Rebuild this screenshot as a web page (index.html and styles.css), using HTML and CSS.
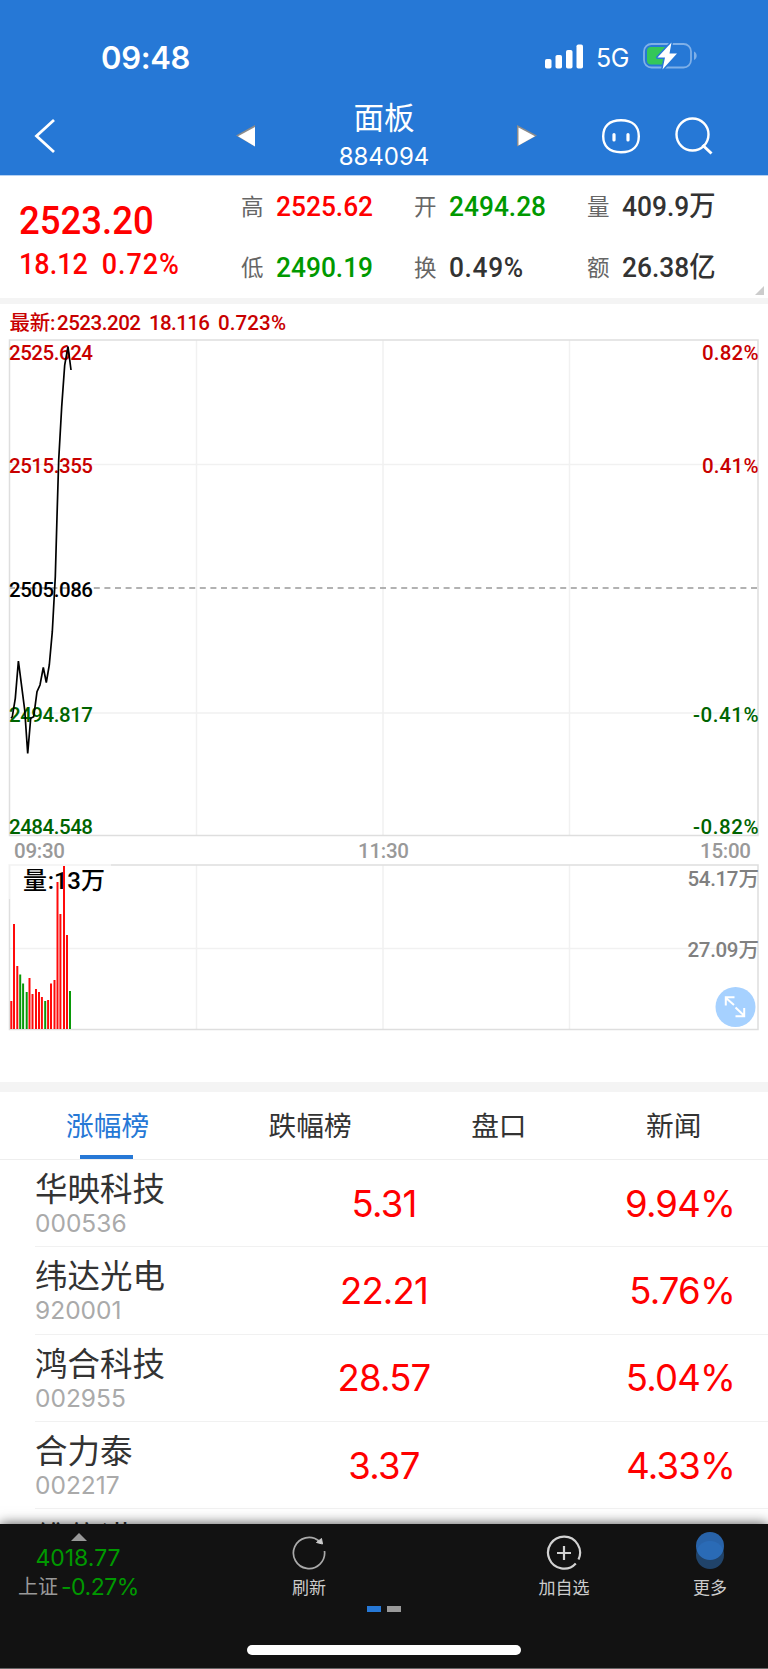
FILE: index.html
```html
<!DOCTYPE html>
<html lang="zh-CN">
<head>
  <meta charset="UTF-8">
  <meta name="viewport" content="width=device-width, initial-scale=1.0">
  <title>面板 884094</title>
  <link rel="stylesheet" href="styles.css">
</head>
<body>
  <header class="header">
    <div class="status-bar">
      <span class="clock">09:48</span>
      <svg class="signal" width="38" height="25" viewBox="0 0 38 25" fill="#fff">
        <rect x="0" y="15" width="6.5" height="9.5" rx="1.8"/>
        <rect x="10.5" y="11" width="6.5" height="13.5" rx="1.8"/>
        <rect x="21" y="6" width="6.5" height="18.5" rx="1.8"/>
        <rect x="31.5" y="0.5" width="6.5" height="24" rx="1.8"/>
      </svg>
      <span class="network">5G</span>
      <svg class="battery" width="55" height="28" viewBox="0 0 55 28">
        <rect x="1" y="2" width="47" height="23.5" rx="7.5" fill="none" stroke="#7fb0e8" stroke-width="1.8"/>
        <path d="M51 9.5c3.6 1.500 3.600 7 0 8.500z" fill="#7fb0e8"/>
        <path d="M8 5h15v17.500H8a4 4 0 0 1-4-4V9a4 4 0 0 1 4-4z" fill="#34c759"/>
        <path d="M28.500 0.500L14.500 15.500H22L19.500 27.500L34 11.500H26.500z" fill="#fff" stroke="#2678d6" stroke-width="3" paint-order="stroke" stroke-linejoin="round"/>
      </svg>
    </div>
    <nav class="nav">
      <svg class="back" width="22" height="36" viewBox="0 0 22 36" fill="none" stroke="#fff" stroke-width="2.800"><path d="M20 2L2.500 18L20 34"/></svg>
      <svg class="arrow" width="19" height="22" viewBox="0 0 19 22"><path d="M19 0L0 10.500L19 21.500z" fill="#8c8c8c"/><path d="M19 2L2 11.200L19 21.500z" fill="#fff"/></svg>
      <div class="title">
        <div class="title-name">面板</div>
        <div class="title-code">884094</div>
      </div>
      <svg class="arrow" width="20" height="22" viewBox="0 0 20 22"><path d="M0 0L20 10.500L0 21.500z" fill="#8c8c8c"/><path d="M1.500 2.500L18 11.200L1.500 20.500z" fill="#fff"/></svg>
      <div class="nav-icons">
        <svg width="38" height="36" viewBox="0 0 38 36" fill="none" stroke="#fff">
          <path d="M19 2.200C31 2.200 36.800 8.500 36.800 18.200S31 34.200 19 34.200S1.200 28 1.200 18.200S7 2.200 19 2.200z" stroke-width="2.400"/>
          <path d="M12 16.500v5.500M26 16.500v5.500" stroke-width="3.200" stroke-linecap="round"/>
        </svg>
        <svg width="38" height="38" viewBox="0 0 38 38" fill="none" stroke="#fff" stroke-width="2.400">
          <circle cx="17.500" cy="17.500" r="16"/>
          <path d="M27.500 28L36.500 36.500" stroke-width="3"/>
        </svg>
      </div>
    </nav>
  </header>

  <section class="quote">
    <div class="quote-main">
      <div class="quote-price">2523.20</div>
      <div class="quote-change"><span>18.12</span><span>0.72%</span></div>
    </div>
    <dl class="quote-grid">
      <div><dt>高</dt><dd class="up">2525.62</dd></div>
      <div><dt>开</dt><dd class="down">2494.28</dd></div>
      <div><dt>量</dt><dd>409.9<i>万</i></dd></div>
      <div><dt>低</dt><dd class="down">2490.19</dd></div>
      <div><dt>换</dt><dd class="turnover">0.49%</dd></div>
      <div><dt>额</dt><dd>26.38<i>亿</i></dd></div>
    </dl>
    <span class="corner"></span>
  </section>

  <section class="chart">
    <svg width="768" height="778" viewBox="0 304 768 778">
      <g class="c-red">
        <text x="9.500" y="330" textLength="46">最新:</text>
        <text x="57" y="330" textLength="84">2523.202</text>
        <text x="149" y="330" textLength="61">18.116</text>
        <text x="218" y="330" textLength="68">0.723%</text>
      </g>

      <!-- price grid -->
      <g class="grid">
        <path d="M196.500 340V835M383 340V835M569.500 340V835M10 464.500H758M10 713H758"/>
        <path d="M196.500 865V1029M383 865V1029M569.500 865V1029M10 948.500H758"/>
      </g>
      <path class="dash" d="M9 588H758"/>
      <rect class="frame" x="9.500" y="340" width="748.500" height="495.500"/>
      <rect class="frame" x="9.500" y="865" width="748.500" height="164.500"/>
      <path d="M9 865H111M9.500 865V899" stroke="#fff" stroke-width="2" opacity="0.600"/>

      <g class="c-red">
        <text x="9" y="360" textLength="84">2525.624</text>
        <text x="9" y="473" textLength="84">2515.355</text>
        <text x="702" y="360" textLength="56.500">0.82%</text>
        <text x="702" y="473" textLength="56.500">0.41%</text>
      </g>
      <text x="9" y="597" textLength="84">2505.086</text>
      <g class="c-green">
        <text x="9" y="721.500" textLength="84">2494.817</text>
        <text x="9" y="834" textLength="84">2484.548</text>
        <text x="693" y="721.500" textLength="65.500">-0.41%</text>
        <text x="693" y="834" textLength="65.500">-0.82%</text>
      </g>
      <polyline class="price" points="11,718.3 12.3,716.7 15.3,698.3 18.4,661 21.7,686.7 24.7,710 27.7,753.500 30.7,718.3 33.7,716.7 37,691.7 40,685 43.3,667.500 46.3,682.500 49.3,665 52.3,631.7 55.3,576.7 57,516.7 58.7,460 61.7,406.7 64.7,365 68,346.500 71,370"/>

      <g class="c-time">
        <text x="14" y="857.500" textLength="51">09:30</text>
        <text x="358" y="857.500" textLength="51">11:30</text>
        <text x="700" y="857.500" textLength="51">15:00</text>
      </g>

      <g class="vol-title">
        <text x="23" y="889" textLength="31">量:</text>
        <text x="54" y="889" textLength="27">13</text>
        <text x="81" y="889" textLength="23">万</text>
      </g>
      <g class="c-grey">
        <text x="687.500" y="885.500" textLength="51">54.17</text>
        <text x="738.500" y="885.500" textLength="20">万</text>
        <text x="687.500" y="956.500" textLength="51">27.09</text>
        <text x="738.500" y="956.500" textLength="20">万</text>
      </g>
      <path class="bar-up" d="M11.300 1029V1001M14 1029V924M17.300 1029V966M29.500 1029V978M32.500 1029V994M36 1029V989M39 1029V992M41.900 1029V997M48.100 1029V1000M51 1029V983.500M54.500 1029V980M57.500 1029V882M60.400 1029V914M64 1029V866M67 1029V935"/>
      <path class="bar-down" d="M20.200 1029V974.500M23.100 1029V983.500M26.700 1029V992M45.200 1029V1001M70 1029V991"/>

      <!-- expand button -->
      <circle cx="735.500" cy="1007" r="20" fill="#a6d1ff"/>
      <path d="M734 1005L726 998M725.800 1005.500V997.300H734.500M735.500 1007.500L744 1015.500M744.200 1008V1016.200H735.500" fill="none" stroke="#fff" stroke-width="2"/>
    </svg>
  </section>

  <section class="rank">
    <div class="tabs">
      <span class="tab active">涨幅榜</span>
      <span class="tab">跌幅榜</span>
      <span class="tab">盘口</span>
      <span class="tab">新闻</span>
    </div>
    <ul class="list">
      <li><div class="stock"><b>华映科技</b><small>000536</small></div><span class="last">5.31</span><span class="pct">9.94%</span></li>
      <li><div class="stock"><b>纬达光电</b><small>920001</small></div><span class="last">22.21</span><span class="pct">5.76%</span></li>
      <li><div class="stock"><b>鸿合科技</b><small>002955</small></div><span class="last">28.57</span><span class="pct">5.04%</span></li>
      <li><div class="stock"><b>合力泰</b><small>002217</small></div><span class="last">3.37</span><span class="pct">4.33%</span></li>
      <li><div class="stock"><b>维信诺</b></div></li>
    </ul>
  </section>

  <footer class="toolbar">
    <div class="tools">
      <div class="index">
        <i class="index-arrow"></i>
        <div class="index-value">4018.77</div>
        <div class="index-row"><span>上证</span><em>-0.27%</em></div>
      </div>
      <div class="tool">
        <svg width="36" height="36" viewBox="0 0 36 36" fill="none" stroke="#aaa" stroke-width="1.700">
          <path d="M33.500 16A15.600 15.600 0 1 1 28 6"/>
          <path d="M25.500 7.500L30.500 3.500L31.500 9z" fill="#ccc" stroke="#ccc" stroke-width="1"/>
        </svg>
        <span>刷新</span>
      </div>
      <div class="tool">
        <svg width="36" height="36" viewBox="0 0 36 36" fill="none" stroke="#d2d2d2" stroke-width="2.200">
          <path d="M32.500 24.500A16 16 0 1 0 29.800 28.500"/>
          <path d="M18 11v14M11 18h14"/>
        </svg>
        <span>加自选</span>
      </div>
      <div class="tool more">
        <svg width="36" height="38" viewBox="0 0 36 38">
          <circle cx="18" cy="23" r="14" fill="#204369"/>
          <circle cx="18" cy="14" r="14" fill="#2d72c4" opacity="0.850"/>
        </svg>
        <span>更多</span>
      </div>
    </div>
    <div class="pager"><i class="on"></i><i></i></div>
    <div class="home-indicator"></div>
  </footer>
</body>
</html>
```
FILE: styles.css
```css
:root {
  --blue: #2678d6;
  --red: #ff0000;
  --green: #009900;
}
* { box-sizing: border-box; }
html, body {
  margin: 0;
  padding: 0;
  height: 1669px;
  overflow: hidden;
  background: #fff;
  color: #333;
  font-family: Inter, "Noto Sans CJK SC", sans-serif;
}
body {
  display: flex;
  flex-direction: column;
}
svg { display: block; }
i, em { font-style: normal; }

/* header */
.header {
  flex: none;
  height: 176px;
  background: var(--blue);
  border-bottom: 1px solid #b5d1f2;
  color: #fff;
}
.status-bar {
  display: flex;
  height: 97px;
  padding: 37px 0 0 101px;
}
.clock {
  width: 444px;
  font-size: 31px;
  line-height: 41px;
  font-weight: 600;
  letter-spacing: -0.3px;
}
.signal { margin-top: 7px; }
.network {
  width: 46px;
  padding-left: 13px;
  font-size: 25px;
  line-height: 42px;
  letter-spacing: -0.5px;
}
.battery { margin: 5px 0 0 14px; }
.nav {
  display: grid;
  grid-template-columns: 236px 19px 262px 20px 1fr;
  height: 78px;
  align-items: center;
}
.back { margin-left: 34px; }
.title {
  height: 72px;
  padding-right: 4px;
  text-align: center;
}
.title-name {
  font-size: 30.5px;
  line-height: 36px;
}
.title-code {
  font-size: 24px;
  line-height: 30px;
  margin-top: 6px;
}
.nav-icons {
  display: flex;
  align-items: center;
  gap: 35px;
  padding-left: 65px;
}

/* quote */
.quote {
  flex: none;
  display: flex;
  position: relative;
  height: 128px;
  padding-left: 19px;
  border-bottom: 6px solid #f4f4f4;
  font-family: Roboto, "Noto Sans CJK SC", sans-serif;
  font-weight: 500;
}
.quote-main {
  width: 222px;
  padding-top: 22px;
  color: var(--red);
}
.quote-price {
  font-size: 39.5px;
  line-height: 46px;
  width: max-content;
  transform: scaleX(0.925);
  transform-origin: left;
}
.quote-change {
  display: flex;
  gap: 15px;
  width: max-content;
  font-size: 29px;
  line-height: 36px;
  margin-top: 2px;
  transform: scaleX(0.93);
  transform-origin: left;
}
.quote-change span:last-child { letter-spacing: 1px; }
.quote-grid {
  display: grid;
  grid-template-columns: 173px 173px 173px;
  grid-template-rows: 61px 61px;
  margin: 0;
}
.quote-grid div {
  display: flex;
  align-items: center;
}
.quote-grid dt {
  width: 35px;
  padding-bottom: 4px;
  font-size: 22.5px;
  font-weight: 400;
  color: #666;
}
.quote-grid dd {
  display: flex;
  align-items: center;
  margin: 0;
  font-size: 28px;
  line-height: 34px;
  transform: scaleX(0.94);
  transform-origin: left;
}
.quote-grid dd i { font-size: 28px; }
.quote-grid .turnover { letter-spacing: 0.7px; }
.up { color: var(--red); }
.down { color: var(--green); }
.corner {
  position: absolute;
  right: 4px;
  bottom: 3px;
  border-left: 9px solid transparent;
  border-bottom: 9px solid #ccc;
}

/* chart */
.chart {
  flex: none;
  height: 788px;
  border-bottom: 10px solid #f4f4f4;
}
.chart text {
  font-family: Roboto, "Noto Sans CJK SC", sans-serif;
  font-size: 20.5px;
  font-weight: 500;
  fill: #000;
}
.chart .c-red text { fill: #c80000; }
.chart .c-green text { fill: #006400; }
.chart .c-time text { fill: #999; }
.chart .c-grey text { fill: #808080; }
.chart .vol-title text { font-size: 24px; }
.grid path {
  fill: none;
  stroke: #f1f1f1;
  stroke-width: 1.5;
}
.frame {
  fill: none;
  stroke: #dedede;
  stroke-width: 1.5;
}
.dash {
  stroke: #999;
  stroke-width: 1.6;
  stroke-dasharray: 6 4.6;
}
.price {
  fill: none;
  stroke: #000;
  stroke-width: 1.7;
}
.bar-up, .bar-down { stroke-width: 2; }
.bar-up { stroke: #ff0a0a; }
.bar-down { stroke: #099909; }

/* rank list */
.rank { flex: none; height: 432px; overflow: hidden; }
.tabs {
  display: flex;
  gap: 119.5px;
  height: 68px;
  padding-left: 66px;
  border-bottom: 1px solid #eee;
}
.tab {
  position: relative;
  font-size: 27.7px;
  line-height: 68px;
}
.tab.active { color: var(--blue); }
.tab.active::after {
  content: "";
  position: absolute;
  left: 14px;
  bottom: 0;
  width: 53px;
  height: 4px;
  background: var(--blue);
}
.list {
  margin: 0;
  padding: 0 0 0 35px;
  list-style: none;
}
.list li {
  display: grid;
  grid-template-columns: 232px 234px 234px;
  align-items: center;
  height: 87.3px;
  border-bottom: 1px solid #f1f1f1;
}
.stock {
  display: flex;
  flex-direction: column;
  height: 86px;
}
.stock b {
  margin-top: 6px;
  font-size: 32.5px;
  line-height: 47px;
  font-weight: 400;
}
.stock small {
  color: #aaa;
  font-size: 24.5px;
  line-height: 21px;
}
.last, .pct {
  padding-top: 1px;
  color: var(--red);
  font-size: 36.5px;
  letter-spacing: -0.8px;
}
.last { text-align: center; }
.pct { text-align: right; }

/* toolbar */
.toolbar {
  position: relative;
  flex: none;
  height: 145px;
  background: #121212;
  border-bottom: 1px solid #666;
  box-shadow: 0 0 12px rgba(0, 0, 0, 0.7);
}
.tools {
  display: grid;
  grid-template-columns: 156px 306px 204px 88px;
  height: 82px;
}
.index { text-align: center; }
.index-arrow {
  display: block;
  width: 16px;
  height: 8px;
  margin: 9px auto 0 71px;
  background: #999;
  clip-path: polygon(50% 0, 100% 100%, 0 100%);
}
.index-value {
  margin-top: 3px;
  font-size: 23px;
  line-height: 29px;
  color: var(--green);
}
.index-row {
  display: flex;
  gap: 3px;
  padding-left: 18px;
  line-height: 29px;
  font-size: 20px;
  color: #999;
}
.index-row em {
  font-size: 23px;
  letter-spacing: -0.5px;
  color: var(--green);
}
.tool {
  display: flex;
  flex-direction: column;
  align-items: center;
  padding-top: 10px;
  color: #ccc;
}
.tool svg {
  flex: none;
  height: 38px;
}
.tool.more { padding-top: 8px; }
.tool.more svg { margin-bottom: 2px; }
.tool span {
  font-size: 17px;
  line-height: 32px;
}
.pager {
  display: flex;
  justify-content: center;
  gap: 6px;
}
.pager i {
  width: 14px;
  height: 6px;
  background: #999;
}
.pager .on { background: var(--blue); }
.home-indicator {
  width: 274px;
  height: 10px;
  margin: 33px auto 0;
  border-radius: 5px;
  background: #fff;
}
```
